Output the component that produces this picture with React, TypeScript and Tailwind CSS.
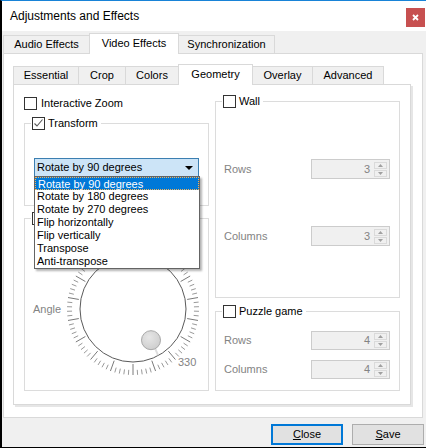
import type { ReactNode } from 'react'

const FONT = "font-['Liberation_Sans',Arial,sans-serif]"

function Box({ checked = false }: { checked?: boolean }) {
  return (
    <span className="w-[13px] h-[13px] border border-[#333333] bg-white flex items-center justify-center shrink-0">
      {checked && (
        <svg width="11" height="11" viewBox="0 0 11 11">
          <path d="M1.5 5.5 L4 8 L9.5 1.5" fill="none" stroke="#5a5a5a" strokeWidth="1.1" />
        </svg>
      )}
    </span>
  )
}

function Check({ label, checked, gap = 'gap-[4px]' }: { label?: string; checked?: boolean; gap?: string }) {
  return (
    <span className={`inline-flex items-center h-[13px] ${gap}`}>
      <Box checked={checked} />
      {label && <span>{label}</span>}
    </span>
  )
}

function Group({ label, checked, className = '', children }: { label?: string; checked?: boolean; className?: string; children: ReactNode }) {
  return (
    <fieldset className={`border border-[#dcdcdc] ${className}`}>
      <legend className="ml-[6px] pl-[1px] pr-[3px] h-[13px]">
        <Check label={label} checked={checked} gap="gap-[3px]" />
      </legend>
      {children}
    </fieldset>
  )
}

function Arrow({ up }: { up?: boolean }) {
  return (
    <svg width="5" height="3" viewBox="0 0 5 3">
      <path d={up ? 'M0 3 L2.5 0 L5 3 Z' : 'M0 0 L2.5 3 L5 0 Z'} fill="#a0a0a0" />
    </svg>
  )
}

function Spin({ value, h = 'h-[20px]' }: { value: number; h?: string }) {
  return (
    <div className={`w-[79px] ${h} border border-[#cccccc] bg-[#f0f0f0] flex items-center`}>
      <span className="flex-1 text-right text-[#838383] pr-[4px]">{value}</span>
      <div className="w-[13px] mr-[2px] flex flex-col gap-px">
        <span className="h-[7px] border border-[#dadada] flex items-center justify-center"><Arrow up /></span>
        <span className="h-[7px] border border-[#dadada] flex items-center justify-center"><Arrow /></span>
      </div>
    </div>
  )
}

function Field({ label, value, className = '', h }: { label: string; value: number; className?: string; h?: string }) {
  return (
    <div className={`flex items-center justify-between pl-[8px] pr-[9px] ${className}`}>
      <span className="text-[#838383]">{label}</span>
      <Spin value={value} h={h} />
    </div>
  )
}

function Dial() {
  const cx = 70
  const cy = 70
  const r = 66
  const ticks = Array.from({ length: 90 }, (_, i) => {
    const a = ((270 - i * 4) * Math.PI) / 180
    const big = (i * 4) % 10 === 0
    const len = big ? 11 : 5
    const c = Math.cos(a)
    const s = Math.sin(a)
    return (
      <line
        key={i}
        x1={cx + (r - len) * c}
        y1={cy - (r - len) * s}
        x2={cx + r * c}
        y2={cy - r * s}
        stroke={big ? '#7a7a7a' : '#9a9a9a'}
        strokeWidth="1"
      />
    )
  })
  const v = (330 * Math.PI) / 180
  const kx = cx - 36 * Math.sin(v)
  const ky = cy + 36 * Math.cos(v)
  return (
    <svg width="140" height="140" viewBox="0 0 140 140" className="shrink-0 overflow-visible">
      {ticks}
      <circle cx={cx} cy={cy} r="53" fill="white" stroke="#5a5a5a" strokeWidth="1" />
      <line x1={kx + 4} y1={ky + 8} x2={kx + 7} y2={ky + 15} stroke="#dedede" strokeWidth="2" />
      <defs>
        <radialGradient id="knob" cx="40%" cy="35%" r="70%">
          <stop offset="0%" stopColor="#e6e6e6" />
          <stop offset="100%" stopColor="#cdcdcd" />
        </radialGradient>
      </defs>
      <circle cx={kx} cy={ky} r="9.5" fill="url(#knob)" stroke="#a8a8a8" strokeWidth="1" />
      <text x="115" y="127" fontSize="11" fill="#838383" fontFamily="Liberation Sans, Arial, sans-serif">330</text>
    </svg>
  )
}

const OPTIONS = [
  'Rotate by 90 degrees',
  'Rotate by 180 degrees',
  'Rotate by 270 degrees',
  'Flip horizontally',
  'Flip vertically',
  'Transpose',
  'Anti-transpose',
]

function Combo() {
  return (
    <div className="relative z-20 ml-[9px] mt-[28px] mb-[28px] w-[165px] h-[19px]">
      <div className="h-full border border-[#3c7fb1] bg-[#cce4f7] flex items-center pl-[2px] pr-[5px]">
        <span className="flex-1">Rotate by 90 degrees</span>
        <svg width="8" height="4" viewBox="0 0 8 4">
          <path d="M0 0 L8 0 L4 4 Z" fill="#000" />
        </svg>
      </div>
      <div className="absolute left-0 top-[18px] w-[166px] border border-[#646464] bg-white shadow-[2px_2px_2px_rgba(0,0,0,0.3)]">
        {OPTIONS.map((o, i) => (
          <div
            key={o}
            className={`h-[13px] leading-[12px] pl-[2px] ${i === 0 ? 'bg-[#0078d7] text-white border border-dotted border-[#f3b35a] pl-[1px]' : ''}`}
          >
            {o}
          </div>
        ))}
      </div>
    </div>
  )
}

function Tab({ label, w, active, first }: { label: string; w: string; active?: boolean; first?: boolean }) {
  return (
    <div
      className={`${w} ${first ? '' : '-ml-px'} border border-b-0 border-[#d9d9d9] flex items-center justify-center ${
        active ? 'h-[21px] -mb-px bg-white relative z-10 pb-[2px]' : 'h-[18px] bg-[#f0f0f0]'
      }`}
    >
      {label}
    </div>
  )
}

export default function App() {
  return (
    <div
      className={`w-[426px] h-[448px] bg-[#f0f0f0] border-t border-t-[#1883d7] border-l-2 border-l-black border-b border-b-black flex flex-col text-[11px] leading-[13px] text-black overflow-hidden ${FONT}`}
    >
      <div className="h-[30px] shrink-0 bg-white flex justify-between pl-[8px]">
        <span className="text-[12px] mt-[9px]">Adjustments and Effects</span>
        <div className="w-[19px] h-[19px] mt-[7px] mr-[1px] bg-[#c75050] flex items-center justify-center">
          <svg width="7" height="7" viewBox="0 0 7 7">
            <path d="M1 1 L6 6 M6 1 L1 6" stroke="white" strokeWidth="1.8" />
          </svg>
        </div>
      </div>

      <div className="flex-1 flex flex-col pl-[1px] pt-[2px]">
        <div className="flex items-end h-[20px]">
          <Tab label="Audio Effects" w="w-[87px]" first />
          <Tab label="Video Effects" w="w-[90px]" active />
          <Tab label="Synchronization" w="w-[97px]" />
        </div>

        <div className="w-[420px] h-[365px] border border-[#d9d9d9] bg-white pl-[9px] pt-[10px]">
          <div className="flex items-end h-[20px]">
            <Tab label="Essential" w="w-[66px]" first />
            <Tab label="Crop" w="w-[48px]" />
            <Tab label="Colors" w="w-[54px]" />
            <Tab label="Geometry" w="w-[75px]" active />
            <Tab label="Overlay" w="w-[61px]" />
            <Tab label="Advanced" w="w-[72px]" />
          </div>

          <div className="w-[398px] h-[321px] border border-[#d9d9d9] shadow-[2px_2px_0_0_#e6e6e6] flex gap-[6px] pl-[10px]">
            <div className="w-[185px] flex flex-col pt-[12px]">
              <Check label="Interactive Zoom" />
              <Group label="Transform" checked className="mt-[7px]">
                <Combo />
              </Group>
              <Group className="mt-[6px]">
                <div className="flex items-center mt-[14px] mb-[11px]">
                  <span className="ml-[8px] w-[28px] text-[#838383]">Angle</span>
                  <div className="ml-[2px]">
                    <Dial />
                  </div>
                </div>
              </Group>
            </div>

            <div className="w-[185px] flex flex-col pt-[10px]">
              <Group label="Wall">
                <Field label="Rows" value={3} className="mt-[51px]" />
                <Field label="Columns" value={3} className="mt-[47px] mb-[51px]" />
              </Group>
              <Group label="Puzzle game" className="mt-[7px]">
                <Field label="Rows" value={4} h="h-[19px]" className="mt-[13px]" />
                <Field label="Columns" value={4} h="h-[19px]" className="mt-[10px] mb-[11px]" />
              </Group>
            </div>
          </div>
        </div>

        <div className="flex justify-end gap-[9px] pr-[2px] mt-[6px]">
          <button className="w-[72px] h-[21px] border-2 border-[#0078d7] bg-[#e1e1e1] flex items-center justify-center">
            <span><span className="underline">C</span>lose</span>
          </button>
          <button className="w-[72px] h-[21px] border border-[#adadad] bg-[#e1e1e1] flex items-center justify-center">
            <span><span className="underline">S</span>ave</span>
          </button>
        </div>
      </div>
    </div>
  )
}
